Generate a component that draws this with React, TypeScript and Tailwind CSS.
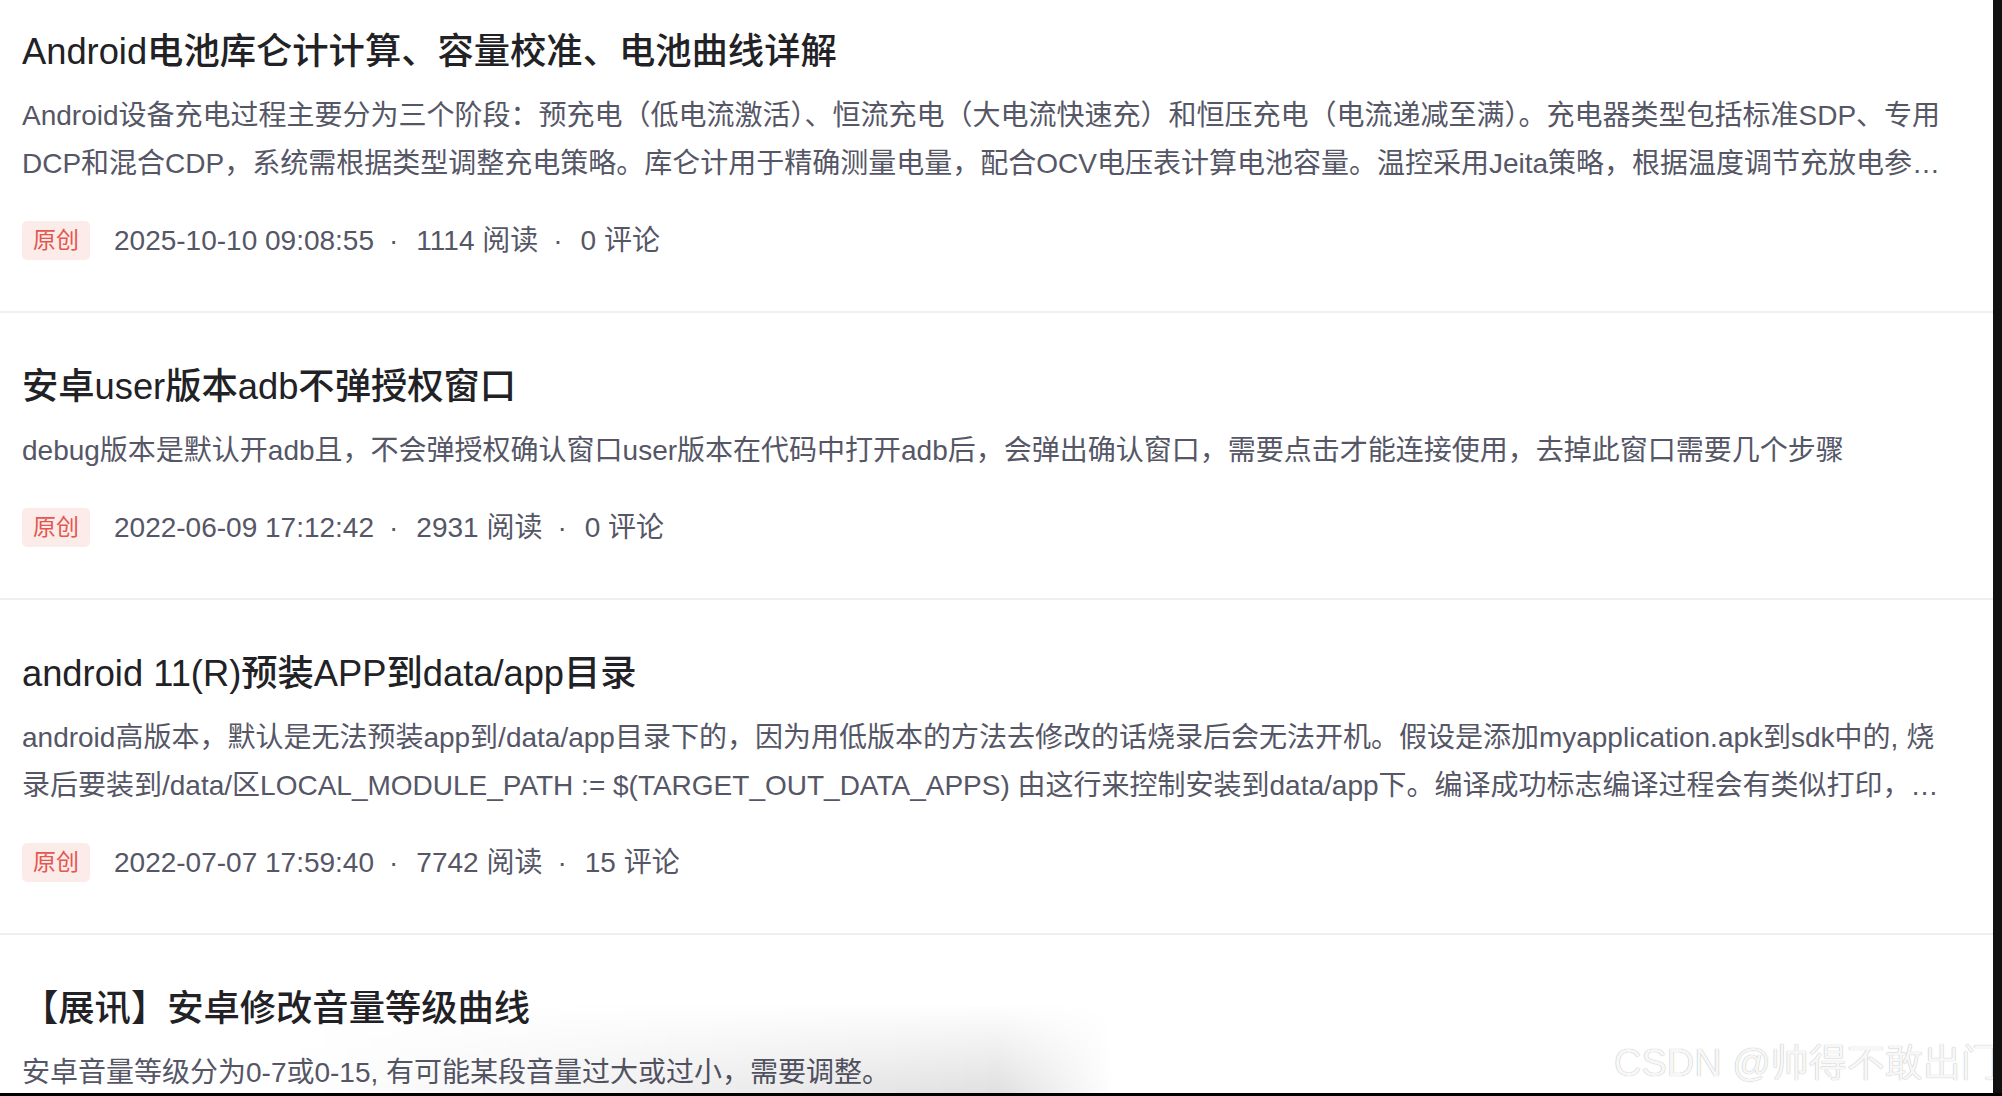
import React from "react";

interface Post {
    title: string;
    desc: string;
    date: string;
    views: number;
    comments: number;
}

const posts: Post[] = [
    {
        title: "Android电池库仑计计算、容量校准、电池曲线详解",
        desc: "Android设备充电过程主要分为三个阶段：预充电（低电流激活）、恒流充电（大电流快速充）和恒压充电（电流递减至满）。充电器类型包括标准SDP、专用DCP和混合CDP，系统需根据类型调整充电策略。库仑计用于精确测量电量，配合OCV电压表计算电池容量。温控采用Jeita策略，根据温度调节充放电参数，保证电池安全。",
        date: "2025-10-10 09:08:55",
        views: 1114,
        comments: 0,
    },
    {
        title: "安卓user版本adb不弹授权窗口",
        desc: "debug版本是默认开adb且，不会弹授权确认窗口user版本在代码中打开adb后，会弹出确认窗口，需要点击才能连接使用，去掉此窗口需要几个步骤",
        date: "2022-06-09 17:12:42",
        views: 2931,
        comments: 0,
    },
    {
        title: "android 11(R)预装APP到data/app目录",
        desc: "android高版本，默认是无法预装app到/data/app目录下的，因为用低版本的方法去修改的话烧录后会无法开机。假设是添加myapplication.apk到sdk中的, 烧录后要装到/data/区LOCAL_MODULE_PATH := $(TARGET_OUT_DATA_APPS) 由这行来控制安装到data/app下。编译成功标志编译过程会有类似打印，安装路径会指向data/app目录。",
        date: "2022-07-07 17:59:40",
        views: 7742,
        comments: 15,
    },
    {
        title: "【展讯】安卓修改音量等级曲线",
        desc: "安卓音量等级分为0-7或0-15, 有可能某段音量过大或过小，需要调整。",
        date: "2022-05-20 10:21:33",
        views: 1808,
        comments: 0,
    },
];

function PostItem({ post, first }: { post: Post; first: boolean }) {
    return (
        <article
            className={`border-b-2 border-[#efeff3] pb-[51px] pl-[22px] pr-[44px] ${first ? "pt-[28px]" : "pt-[50px]"}`}
        >
            <h2 className="truncate text-[36.3px] font-medium leading-[48px] text-[#222226]">{post.title}</h2>
            <p className="mt-[16px] line-clamp-2 text-[28px] leading-[48px] text-[#555666]">{post.desc}</p>
            <div className="mt-[33px] flex h-[39px] items-center whitespace-nowrap text-[28px] text-[#555666]">
                <span className="rounded-[5px] bg-[#fbecea] px-[11px] text-[23px] leading-[39px] text-[#e5564e]">
                    原创
                </span>
                <span className="ml-[24px]">{post.date}</span>
                <span className="ml-[15px] mr-[18px]">·</span>
                <span>{post.views} 阅读</span>
                <span className="ml-[15px] mr-[18px]">·</span>
                <span>{post.comments} 评论</span>
            </div>
        </article>
    );
}

export default function App() {
    return (
        <div className="flex h-[1096px] w-full flex-col overflow-hidden bg-black font-['Liberation_Sans','Noto_Sans_CJK_SC',sans-serif]">
            <div className="flex min-h-0 flex-1">
                <div className="relative min-w-0 flex-1 overflow-hidden bg-white">
                    {posts.map((post, i) => (
                        <PostItem key={post.title} post={post} first={i === 0} />
                    ))}

                    {/* bottom shadow from the capture */}
                    <div className="pointer-events-none absolute bottom-0 left-[290px] h-[90px] w-[825px] bg-[linear-gradient(to_right,transparent,rgba(0,0,0,0.12)_86%,transparent)] [mask-image:linear-gradient(to_top,black,transparent)]" />

                    {/* watermark */}
                    <div className="pointer-events-none absolute left-[1614px] top-[1038px] whitespace-nowrap text-[38px] leading-[50px] text-[#f7f7f7] [text-shadow:0_0_1px_rgba(0,0,0,0.38)]">
                        CSDN @帅得不敢出门
                    </div>
                </div>
                <div className="w-[9px] bg-[#111111]" />
            </div>
            <div className="h-[3px] bg-black" />
        </div>
    );
}
